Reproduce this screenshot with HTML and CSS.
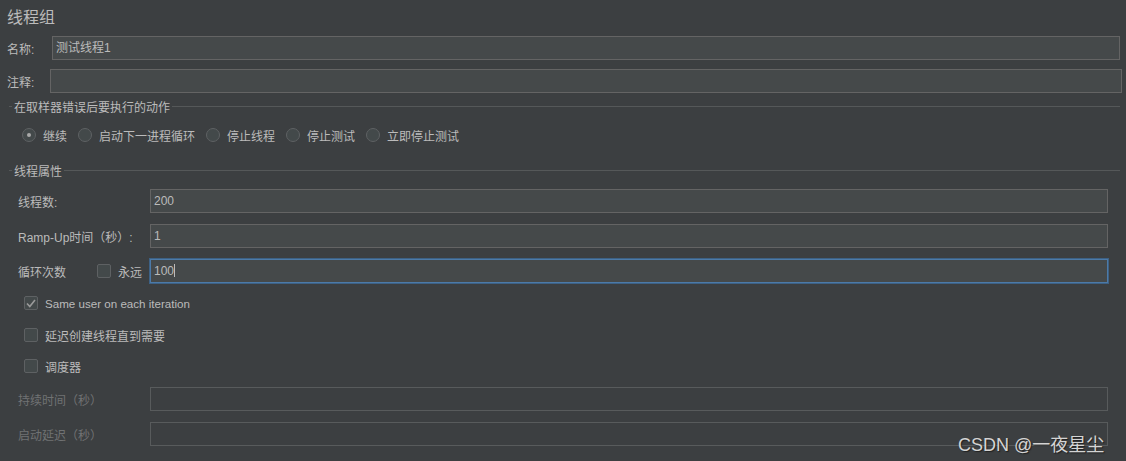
FILE: index.html
```html
<!DOCTYPE html>
<html lang="zh-CN">
  <head>
    <meta charset="UTF-8" />
    <meta name="viewport" content="width=device-width, initial-scale=1.0" />
    <title>线程组</title>
    <link rel="stylesheet" href="styles.css">
  </head>
  <body>
    <div class="panel">
      <div class="title">线程组</div>

      <div class="row row-name">
        <label class="label-top">名称:</label>
        <div class="field name-field">测试线程1</div>
      </div>
      <div class="row row-comment">
        <label class="label-top label-comment">注释:</label>
        <div class="field comment-field"></div>
      </div>

      <!-- sampler error action -->
      <div class="legend legend-first">
        <span class="legend-dash"></span>
        <span class="legend-text">在取样器错误后要执行的动作</span>
        <span class="legend-line"></span>
      </div>
      <div class="radios">
        <div class="radio-item"><span class="radio checked"></span>继续</div>
        <div class="radio-item"><span class="radio"></span>启动下一进程循环</div>
        <div class="radio-item"><span class="radio"></span>停止线程</div>
        <div class="radio-item"><span class="radio"></span>停止测试</div>
        <div class="radio-item"><span class="radio"></span>立即停止测试</div>
      </div>

      <!-- thread properties -->
      <div class="legend legend-second">
        <span class="legend-dash"></span>
        <span class="legend-text">线程属性</span>
        <span class="legend-line"></span>
      </div>

      <div class="props">
        <div class="prop-row row-threads">
          <div class="prop-label">线程数:</div>
          <div class="field prop-field">200</div>
        </div>
        <div class="prop-row row-ramp">
          <div class="prop-label">Ramp-Up时间（秒）:</div>
          <div class="field prop-field">1</div>
        </div>
        <div class="prop-row row-loop">
          <div class="loop-label">循环次数</div>
          <div class="forever"><span class="box"></span>永远</div>
          <div class="field prop-field focused">100<span class="caret"></span></div>
        </div>

        <div class="check-row check-same"><span class="box checked"><svg width="10" height="9" viewBox="0 0 10 9"><path d="M1 4.5 L3.8 7.5 L9 1" fill="none" stroke="#9a9a9a" stroke-width="1.6"/></svg></span><span class="latin">Same user on each iteration</span></div>
        <div class="check-row check-delay"><span class="box"></span>延迟创建线程直到需要</div>
        <div class="check-row check-sched"><span class="box"></span>调度器</div>

        <div class="prop-row row-duration">
          <div class="prop-label disabled">持续时间（秒）</div>
          <div class="field prop-field off"></div>
        </div>
        <div class="prop-row row-delay">
          <div class="prop-label disabled">启动延迟（秒）</div>
          <div class="field prop-field off"></div>
        </div>
      </div>
    </div>

    <div class="watermark">CSDN @一夜星尘</div>
  </body>
</html>
```

FILE: styles.css
```css
/* Basic reset */
body,
html {
  margin: 0;
  padding: 0;
  background-color: #3c3f41;
  color: #bbbbbb;
  font-family: "Liberation Sans", "Noto Sans CJK SC", sans-serif;
  font-size: 12px;
}

body {
  width: 1126px;
  height: 461px;
  overflow: hidden;
  position: relative;
}

.panel {
  display: flex;
  flex-direction: column;
}

.title {
  height: 36px;
  line-height: 36px;
  font-size: 16px;
  padding-left: 7px;
}

/* name / comment rows */
.row {
  display: flex;
  align-items: center;
  height: 24px;
  padding-left: 7px;
}

.row-comment {
  margin-top: 9px;
}

.label-top {
  width: 45px;
  flex-shrink: 0;
}

.label-comment {
  width: 43px;
}

.field {
  box-sizing: border-box;
  height: 24px;
  line-height: 22px;
  background-color: #45494a;
  border: 1px solid #646464;
  padding-left: 3px;
  color: #bbbbbb;
}

.name-field {
  width: 1068px;
}

.comment-field {
  width: 1072px;
}

/* titled borders */
.legend {
  display: flex;
  align-items: center;
  height: 14px;
  width: 1111px;
  padding-left: 9px;
}

.legend-first {
  margin-top: 6px;
}

.legend-second {
  margin-top: 16px;
}

.legend-dash {
  width: 3px;
  height: 1px;
  background-color: #555859;
}

.legend-text {
  padding: 0 2px;
}

.legend-line {
  flex: 1;
  height: 1px;
  background-color: #555859;
}

/* radio buttons */
.radios {
  display: flex;
  align-items: center;
  height: 24px;
  margin-top: 10px;
  padding-left: 22px;
}

.radio-item {
  display: flex;
  align-items: center;
  margin-right: 11px;
}

.radio {
  box-sizing: border-box;
  width: 14px;
  height: 14px;
  border-radius: 50%;
  border: 1px solid #5e6163;
  background-color: #43494a;
  margin-right: 7px;
  position: relative;
}

.radio.checked::after {
  content: "";
  position: absolute;
  left: 4px;
  top: 4px;
  width: 4px;
  height: 4px;
  border-radius: 50%;
  background-color: #a9a9a9;
}

/* thread properties */
.props {
  display: flex;
  flex-direction: column;
  padding-left: 18px;
}

.prop-row {
  display: flex;
  align-items: center;
  height: 24px;
}

.row-threads {
  margin-top: 12px;
}

.row-ramp {
  margin-top: 11px;
}

.row-loop {
  margin-top: 11px;
}

.row-duration {
  margin-top: 11px;
}

.row-delay {
  margin-top: 11px;
}

.prop-label {
  width: 132px;
  flex-shrink: 0;
}

.prop-label.disabled {
  color: #707273;
}

.prop-field {
  width: 958px;
}

.prop-field.off {
  background-color: transparent;
  border-color: #585b5c;
}

.prop-field.focused {
  border-color: #4c7aa8;
  box-shadow: 0 0 0 1px #3d6185;
}

.caret {
  display: inline-block;
  width: 1px;
  height: 13px;
  background-color: #bbbbbb;
  vertical-align: -2px;
}

.loop-label {
  width: 79px;
  flex-shrink: 0;
}

.forever {
  display: flex;
  align-items: center;
  width: 53px;
  flex-shrink: 0;
}

.box {
  box-sizing: border-box;
  width: 14px;
  height: 14px;
  border: 1px solid #5e6163;
  border-radius: 2px;
  background-color: #43494a;
  margin-right: 7px;
  display: flex;
  align-items: center;
  justify-content: center;
}

.check-row {
  display: flex;
  align-items: center;
  height: 20px;
  padding-left: 6px;
}

.latin {
  font-size: 11.6px;
}

.check-same {
  margin-top: 10px;
}

.check-delay {
  margin-top: 12px;
}

.check-sched {
  margin-top: 11px;
}

/* watermark over the last field */
.watermark {
  position: absolute;
  left: 958px;
  top: 430px;
  font-size: 18px;
  color: #d4d4d4;
  text-shadow: 1px 1px 1px #202020;
}
```
